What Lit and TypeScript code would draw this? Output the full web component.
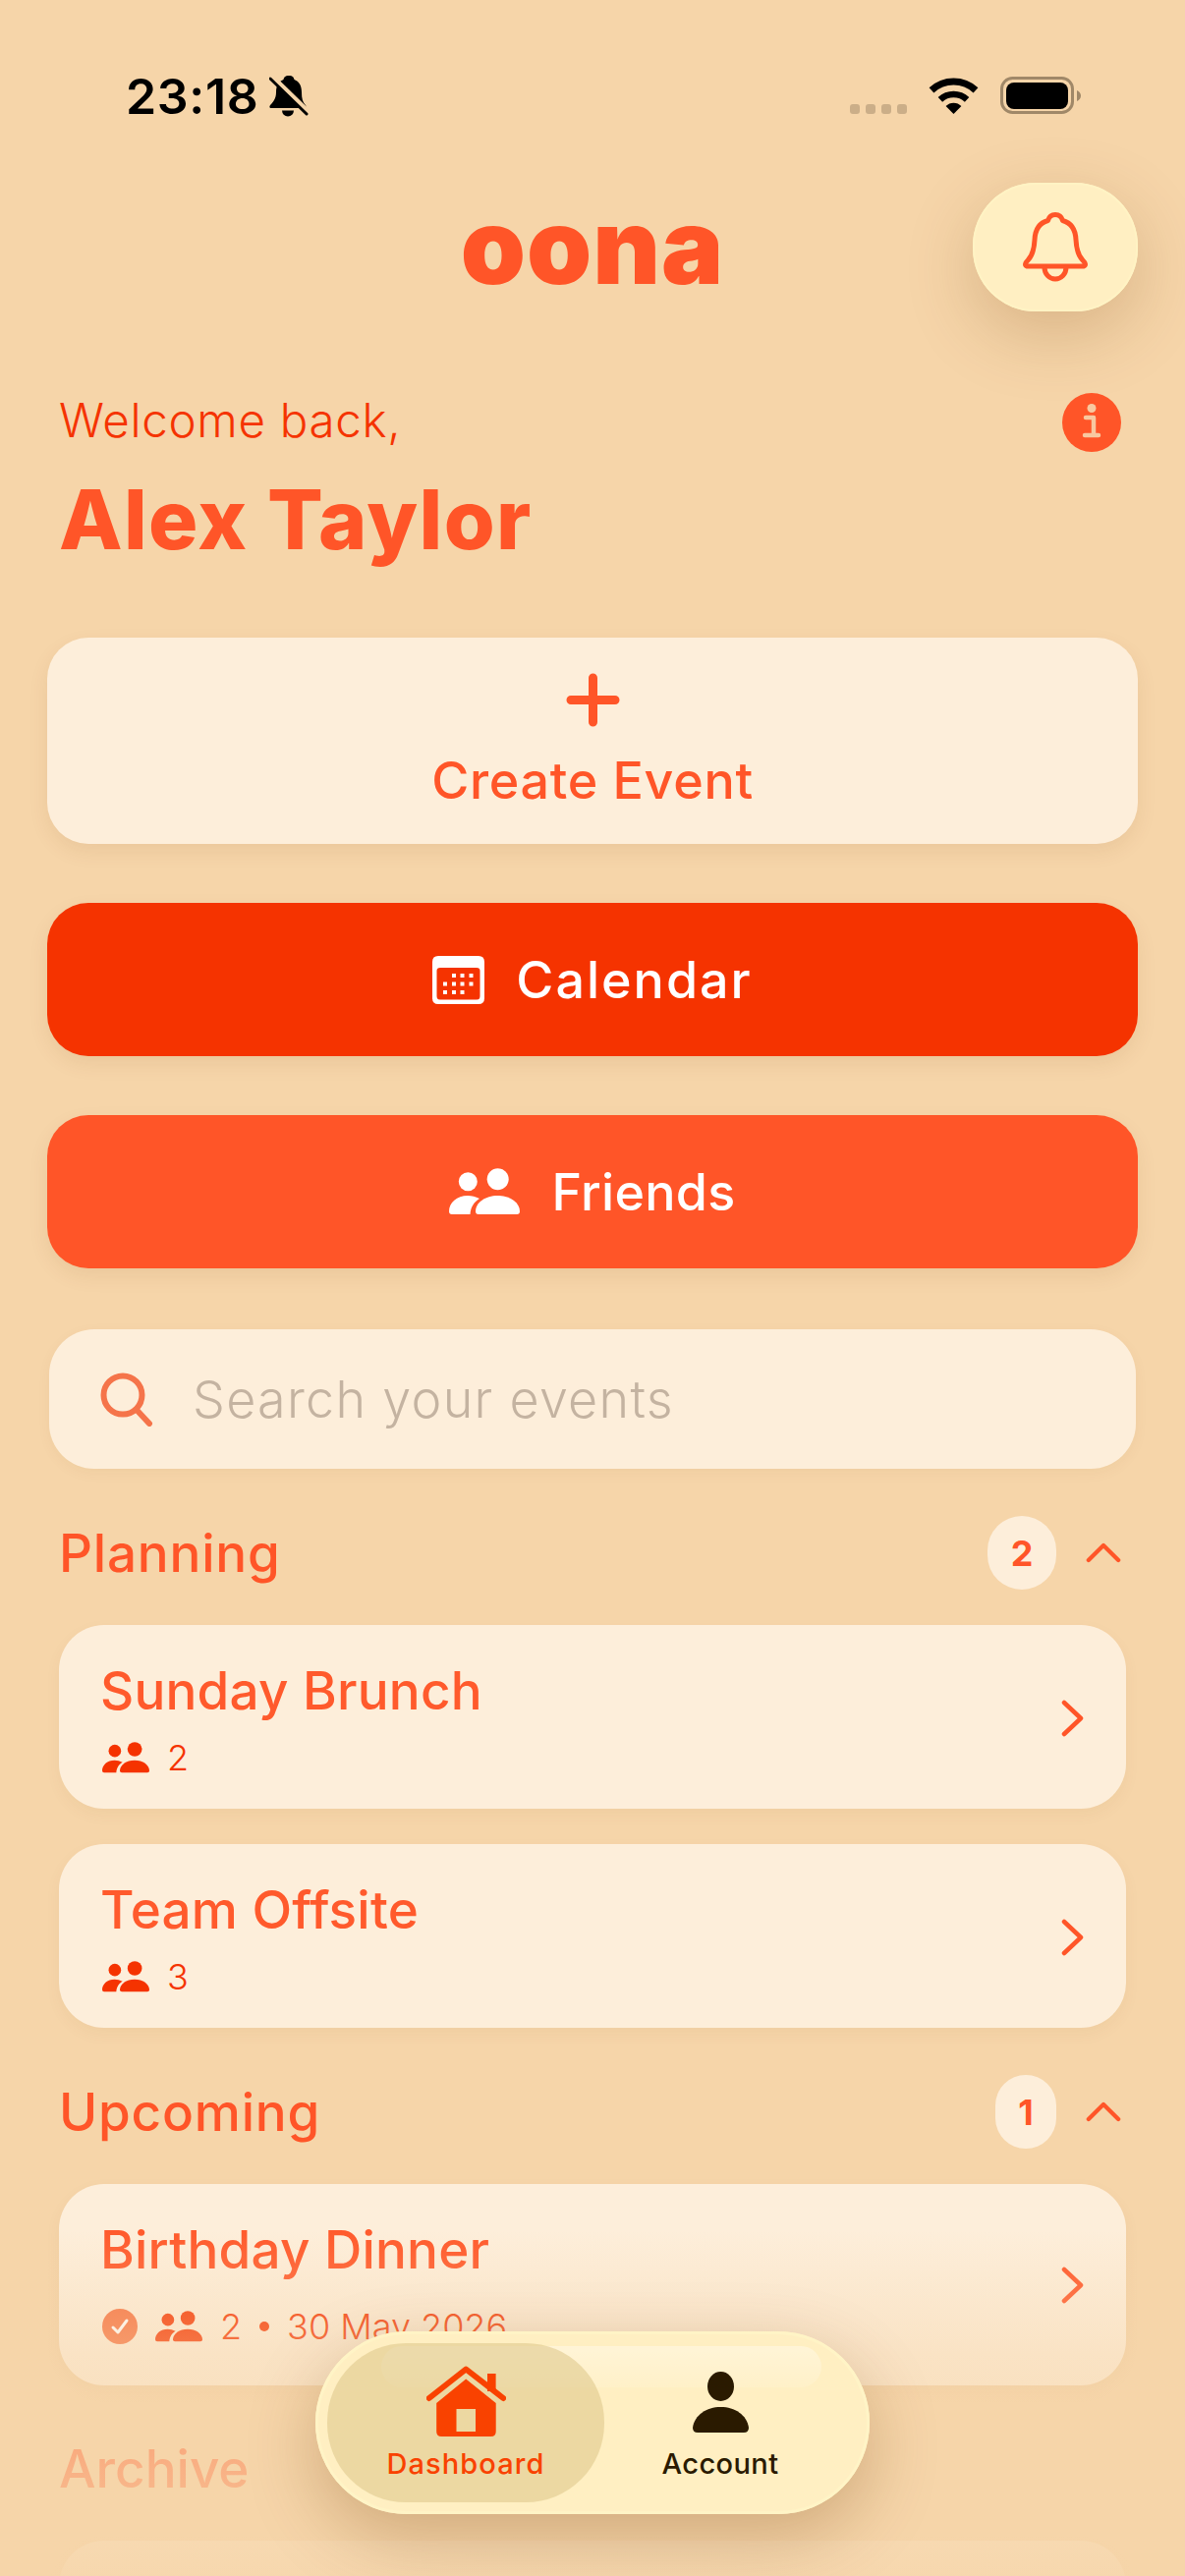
import { LitElement, html, css, svg } from 'lit';
import { customElement } from 'lit/decorators.js';

const people = svg`<circle cx="19.3" cy="13.7" r="9.5"/><circle cx="49.7" cy="11.3" r="11"/>
  <path d="M0 44C0 35 8 28 19 28C23 28 27 29 31 31C26 34 22 39 21.5 47L3 47Q0 47 0 44Z"/>
  <path d="M27 44C27 35 37 28 49.5 28C62 28 72 35 72 44Q72 47 69 47L30 47Q27 47 27 44Z"/>`;

const chevronRight = html`<svg class="chev" viewBox="0 0 24 38"><path d="M3 3L20 19L3 35"/></svg>`;
const chevronUp = html`<svg class="chev-up" viewBox="0 0 38 22"><path d="M3 19L19 3L35 19"/></svg>`;

interface EventItem {
  title: string;
  count: number;
  date?: string;
}

@customElement('app-root')
export class AppRoot extends LitElement {
  static styles = css`
    :host {
      display: block;
      width: 1206px;
      height: 2622px;
      font-family: Inter, "Noto Sans", sans-serif;
    }
    .screen {
      position: relative;
      height: 2622px;
      overflow: hidden;
      background: #f6d5a9;
    }
    .status {
      display: flex;
      justify-content: space-between;
      align-items: flex-start;
      height: 186px;
      box-sizing: border-box;
      padding: 77px 106px 0 128px;
    }
    .time {
      display: flex;
      align-items: center;
      gap: 10px;
      height: 42px;
      font-size: 50px;
      font-weight: 600;
      color: #000;
      letter-spacing: 0.7px;
    }
    .time svg { width: 40px; height: 42px; }
    .sys {
      display: flex;
      align-items: flex-end;
      height: 39px;
    }
    .dots { display: flex; gap: 6px; margin-right: 22px; }
    .dots i { width: 10px; height: 10px; border-radius: 3px; background: #cbae88; }
    .wifi { width: 51px; height: 37px; margin-right: 22px; }
    .battery { width: 82px; height: 38px; }

    .top {
      display: grid;
      grid-template-columns: 168px 1fr 168px;
      align-items: center;
      height: 131px;
      padding: 0 48px;
    }
    .logo {
      grid-column: 2;
      text-align: center;
      font-size: 106px;
      line-height: 129px;
      height: 131px;
      font-weight: 900;
      color: #ff5528;
      letter-spacing: 1px;
    }
    .bell {
      grid-column: 3;
      display: flex;
      align-items: center;
      justify-content: center;
      height: 131px;
      border-radius: 64px;
      background: #ffefc2;
      box-shadow: inset 0 0 0 2px #fff3c4, 0 22px 70px rgba(120, 70, 20, 0.24);
    }
    .bell svg { width: 66px; height: 71px; fill: none; stroke: #ff5528; stroke-width: 5; stroke-linejoin: round; stroke-linecap: round; }

    .greet {
      display: flex;
      justify-content: space-between;
      align-items: center;
      height: 60px;
      margin-top: 83px;
      padding: 0 65px 0 60px;
      font-size: 47.5px;
      font-weight: 300;
      letter-spacing: 0.7px;
      color: #f53300;
    }
    .greet span { margin-bottom: 6px; }
    .greet svg { width: 60px; height: 60px; }
    .name {
      margin: 19px 0 0;
      height: 100px;
      padding-left: 60px;
      font-size: 84px;
      line-height: 100px;
      font-weight: 800;
      color: #ff5528;
      letter-spacing: 1.3px;
    }

    .actions {
      display: flex;
      flex-direction: column;
      gap: 60px;
      margin-top: 70px;
      padding: 0 48px;
    }
    .btn {
      display: flex;
      align-items: center;
      justify-content: center;
      height: 156px;
      border-radius: 42px;
      font-size: 52px;
      font-weight: 500;
      color: #fff;
      box-shadow: 0 8px 20px rgba(120, 70, 20, 0.09);
    }
    .btn.create {
      flex-direction: column;
      box-sizing: border-box;
      height: 210px;
      padding-bottom: 4px;
      gap: 30px;
      background: #fdeeda;
      color: #ff5528;
      letter-spacing: 0.7px;
    }
    .btn.create svg { width: 55px; height: 55px; stroke: #ff5528; stroke-width: 9; stroke-linecap: round; }
    .btn.create span { line-height: 50px; }
    .btn.calendar { background: #f53300; gap: 32px; letter-spacing: 2px; }
    .btn.calendar svg { width: 53px; height: 49px; }
    .btn.friends { background: #ff5528; gap: 32px; letter-spacing: 0.3px; }
    .btn.friends svg { width: 72px; height: 48px; fill: #fff; }

    .search {
      display: flex;
      align-items: center;
      gap: 40px;
      height: 142px;
      margin: 62px 50px 0;
      padding-left: 52px;
      border-radius: 46px;
      background: #fdeeda;
      font-size: 52px;
      font-weight: 300;
      letter-spacing: 1.3px;
      color: #c4b3a1;
      box-shadow: 0 4px 14px rgba(120, 70, 20, 0.05);
    }
    .search svg { width: 54px; height: 55px; fill: none; stroke: #f5744a; stroke-width: 6; stroke-linecap: round; }

    .section {
      display: flex;
      justify-content: space-between;
      align-items: center;
      height: 75px;
      margin-top: 48px;
      padding: 0 65px 0 60px;
      font-size: 53px;
      font-weight: 500;
      letter-spacing: 0.8px;
      color: #ff5528;
    }
    .section.archive { margin-top: 47px; letter-spacing: 0; }
    .side { display: flex; align-items: center; gap: 30px; }
    .badge {
      display: flex;
      align-items: center;
      justify-content: center;
      min-width: 62px;
      height: 75px;
      padding: 0 4px;
      box-sizing: border-box;
      border-radius: 38px;
      background: #fdeeda;
      font-size: 36px;
      font-weight: 700;
      letter-spacing: 0;
    }
    .badge.wide { min-width: 70px; }
    .chev-up { width: 36px; height: 21px; fill: none; stroke: #ff5528; stroke-width: 4.5; stroke-linecap: round; stroke-linejoin: round; }

    .list {
      display: flex;
      flex-direction: column;
      gap: 36px;
      margin-top: 36px;
      padding: 0 60px;
    }
    .card {
      display: flex;
      align-items: center;
      justify-content: space-between;
      box-sizing: border-box;
      height: 187px;
      padding: 2px 42px 0 42px;
      border-radius: 46px;
      background: #fdeeda;
      box-shadow: 0 6px 16px rgba(120, 70, 20, 0.05);
    }
    .card.tall { height: 205px; padding-top: 0; padding-bottom: 6px; }
    .card.tall .meta { margin-top: 30px; }
    .card.tall .chev { margin-top: 6px; }
    .card-title {
      font-size: 53px;
      line-height: 60px;
      font-weight: 500;
      letter-spacing: 0.2px;
      color: #ff5a2c;
    }
    .meta {
      display: flex;
      align-items: center;
      gap: 18px;
      height: 36px;
      margin-top: 20px;
      padding-left: 2px;
      font-size: 36px;
      font-weight: 300;
      color: #f53300;
    }
    .meta .ppl { width: 48px; height: 32px; fill: #f53300; }
    .meta .check { width: 36px; height: 36px; }
    .meta .sep { width: 10px; height: 10px; border-radius: 50%; background: currentColor; }
    .chev { width: 24px; height: 38px; fill: none; stroke: #ff5528; stroke-width: 4.5; stroke-linecap: round; stroke-linejoin: round; }

    .fade {
      position: absolute;
      left: 0;
      right: 0;
      top: 2270px;
      height: 352px;
      pointer-events: none;
      background: linear-gradient(to bottom, rgba(246, 213, 169, 0) 0%, rgba(246, 213, 169, 0.45) 37%, rgba(246, 213, 169, 0.72) 69%, rgba(246, 213, 169, 0.9) 100%);
    }

    .nav {
      position: absolute;
      left: 321px;
      top: 2373px;
      display: flex;
      box-sizing: border-box;
      width: 564px;
      height: 186px;
      padding: 12px;
      border-radius: 93px;
      background: #ffefc2;
      box-shadow: inset 0 0 0 3px #fff4c6, 0 24px 70px rgba(110, 60, 10, 0.28);
    }
    .nav::before {
      content: "";
      position: absolute;
      left: 67px;
      right: 49px;
      top: 15px;
      height: 42px;
      border-radius: 40px;
      background: linear-gradient(to bottom, rgba(255, 255, 255, 0.34), rgba(255, 255, 255, 0.1));
    }
    .tab {
      position: relative;
      display: flex;
      flex-direction: column;
      align-items: center;
      justify-content: flex-end;
      flex-shrink: 0;
      box-sizing: border-box;
      height: 162px;
      padding-bottom: 21px;
      font-size: 29px;
      line-height: 36px;
      font-weight: 500;
      letter-spacing: 0.4px;
    }
    .tab.on {
      width: 282px;
      border-radius: 80px;
      background: rgba(222, 200, 140, 0.58);
      color: #f94200;
      letter-spacing: 1.1px;
    }
    .tab.off { width: 236px; color: #2a1a00; }
    .tab svg { margin-bottom: 9px; }
    .tab.on svg { width: 81px; height: 73px; }
    .tab.off svg { width: 57px; height: 62px; margin-bottom: 14px; fill: #2a1a00; }
  `;

  planning: EventItem[] = [
    { title: 'Sunday Brunch', count: 2 },
    { title: 'Team Offsite', count: 3 },
  ];

  renderCard(e: EventItem) {
    return html`
      <div class="card ${e.date ? 'tall' : ''}">
        <div>
          <div class="card-title">${e.title}</div>
          <div class="meta">
            ${e.date
              ? html`<svg class="check" viewBox="0 0 36 36"><circle cx="18" cy="18" r="18" fill="#f6703f"/><path d="M11 19L16 24L25 12" fill="none" stroke="#fff" stroke-width="3" stroke-linecap="round" stroke-linejoin="round"/></svg>`
              : ''}
            <svg class="ppl" viewBox="0 0 72 48">${people}</svg>
            <span>${e.count}</span>
            ${e.date ? html`<i class="sep"></i><span>${e.date}</span>` : ''}
          </div>
        </div>
        ${chevronRight}
      </div>
    `;
  }

  render() {
    return html`
      <div class="screen">
        <div class="status">
          <div class="time">
            <span>23:18</span>
            <svg viewBox="0 0 40 42">
              <path d="M20 0C16 0 15 2 14.5 4C9 6 7 11 7 17C7 23 4 27 1.5 29.5C0 31 0 33 2 33L36 33C38 33 38 31 36.5 29.5C34 27 33 23 33 17C33 11 31 6 25.5 4C25 2 24 0 20 0Z"/>
              <path d="M13 35.5a6 6 0 0 0 12 0Z"/>
              <path d="M3 1L39 36" stroke="#f6d5a9" stroke-width="5"/>
              <path d="M1 3L38 39" stroke="#000" stroke-width="3" stroke-linecap="round"/>
            </svg>
          </div>
          <div class="sys">
            <div class="dots"><i></i><i></i><i></i><i></i></div>
            <svg class="wifi" viewBox="0 0 51 37">
              <path d="M3 12.9A33 33 0 0 1 48 12.9" fill="none" stroke="#000" stroke-width="7"/>
              <path d="M11.9 22.4A20 20 0 0 1 39.1 22.4" fill="none" stroke="#000" stroke-width="6.5"/>
              <path d="M25.5 37L17.6 29A11 11 0 0 1 33.4 29Z"/>
            </svg>
            <svg class="battery" viewBox="0 0 82 38">
              <rect x="1.5" y="1.5" width="72" height="35" rx="11" fill="none" stroke="#a08868" stroke-width="3"/>
              <rect x="6" y="6" width="63" height="27" rx="8"/>
              <path d="M78 14C80.5 15 82 17 82 19.5C82 22 80.5 24 78 25Z" fill="#a08868"/>
            </svg>
          </div>
        </div>

        <div class="top">
          <div class="logo">oona</div>
          <div class="bell">
            <svg viewBox="0 0 66 71">
              <path d="M33 2.5C29 2.5 26.5 5 25.5 8.5C16 11 12.5 18 12 28C11.5 38 10 44 5 49C2.5 51.5 1.5 54 4 55L62 55C64.5 54 63.5 51.5 61 49C56 44 54.5 38 54 28C53.5 18 50 11 40.5 8.5C39.5 5 37 2.5 33 2.5Z"/>
              <path d="M22 56C22 63 27 68 33 68C39 68 44 63 44 56"/>
            </svg>
          </div>
        </div>

        <div class="greet">
          <span>Welcome back,</span>
          <svg viewBox="0 0 60 60">
            <circle cx="30" cy="30" r="30" fill="#ff5528"/>
            <circle cx="30" cy="15.5" r="4.5" fill="#f8c8a0"/>
            <path d="M24 25H32V43H37M23 43H37" fill="none" stroke="#f8c8a0" stroke-width="4.5" stroke-linecap="round" stroke-linejoin="round"/>
          </svg>
        </div>
        <h1 class="name">Alex Taylor</h1>

        <div class="actions">
          <div class="btn create">
            <svg viewBox="0 0 55 55"><path d="M27.5 5V50M5 27.5H50"/></svg>
            <span>Create Event</span>
          </div>
          <div class="btn calendar">
            <svg viewBox="0 0 53 49">
              <path fill="#fff" fill-rule="evenodd" d="M6 0H47Q53 0 53 6V43Q53 49 47 49H6Q0 49 0 43V6Q0 0 6 0ZM8 12Q4.5 12 4.5 15V41Q4.5 44.5 8 44.5H45Q48.5 44.5 48.5 41V15Q48.5 12 45 12Z"/>
              <g fill="#fff">
                <rect x="20" y="18" width="4" height="4"/><rect x="28.5" y="18" width="4" height="4"/><rect x="37.5" y="18" width="4" height="4"/>
                <rect x="11" y="26.5" width="4" height="4"/><rect x="20" y="26.5" width="4" height="4"/><rect x="28.5" y="26.5" width="4" height="4"/><rect x="37.5" y="26.5" width="4" height="4"/>
                <rect x="11" y="35" width="4" height="4"/><rect x="20" y="35" width="4" height="4"/><rect x="28.5" y="35" width="4" height="4"/>
              </g>
            </svg>
            <span>Calendar</span>
          </div>
          <div class="btn friends">
            <svg viewBox="0 0 72 48">${people}</svg>
            <span>Friends</span>
          </div>
        </div>

        <div class="search">
          <svg viewBox="0 0 54 55">
            <circle cx="23" cy="23" r="19.5"/>
            <path d="M37 38L50 52"/>
          </svg>
          <span>Search your events</span>
        </div>

        <div class="section">
          <span>Planning</span>
          <div class="side"><div class="badge wide">2</div>${chevronUp}</div>
        </div>
        <div class="list">${this.planning.map((e) => this.renderCard(e))}</div>

        <div class="section">
          <span>Upcoming</span>
          <div class="side"><div class="badge">1</div>${chevronUp}</div>
        </div>
        <div class="list">${this.renderCard({ title: 'Birthday Dinner', count: 2, date: '30 May 2026' })}</div>

        <div class="section archive"><span>Archive</span></div>
        <div class="list"><div class="card"></div></div>

        <div class="fade"></div>

        <nav class="nav">
          <div class="tab on">
            <svg viewBox="0 0 81 73">
              <path d="M2.7 33L40.2 3.5L78.2 33" fill="none" stroke="#f94200" stroke-width="6" stroke-linecap="round" stroke-linejoin="round"/>
              <rect x="62" y="8" width="8.6" height="18" fill="#f94200"/>
              <path fill="#f94200" fill-rule="evenodd" d="M10.2 38L40.2 13.5L70.7 38V67Q70.7 72 65.7 72H15.2Q10.2 72 10.2 67ZM30.5 44V67H50V44Z"/>
            </svg>
            <span>Dashboard</span>
          </div>
          <div class="tab off">
            <svg viewBox="0 0 57 62">
              <ellipse cx="28.5" cy="15" rx="13.5" ry="15"/>
              <path d="M0 57C2 44 14 36 28.5 36C43 36 55 44 57 57Q57 62 52 62H5Q0 62 0 57Z"/>
            </svg>
            <span>Account</span>
          </div>
        </nav>
      </div>
    `;
  }
}
